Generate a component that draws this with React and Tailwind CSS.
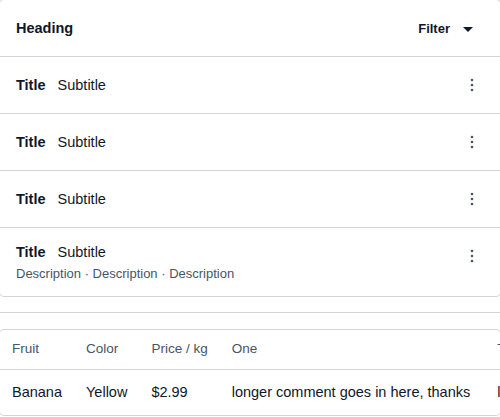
import React from "react";

function Kebab({ className = "" }) {
  return (
    <svg width="16" height="16" viewBox="0 0 16 16" className={className} aria-hidden="true">
      <circle cx="8" cy="3" r="1.3" fill="#4b5563" />
      <circle cx="8" cy="8" r="1.3" fill="#4b5563" />
      <circle cx="8" cy="13" r="1.3" fill="#4b5563" />
    </svg>
  );
}

function Row() {
  return (
    <div className="flex h-[57px] items-center justify-between border-b border-[#d4d4d8] pl-4 pr-5">
      <div className="flex items-baseline text-[14.5px] leading-[22px] text-[#0f172a]">
        <span className="font-bold">Title</span>
        <span className="ml-3">Subtitle</span>
      </div>
      <Kebab />
    </div>
  );
}

export default function App() {
  return (
    <div
      className="min-h-[417px] w-[500px] overflow-hidden bg-white"
      style={{ fontFamily: '"Liberation Sans", Arial, sans-serif' }}
    >
      <div className="rounded-[4px] bg-white ring-1 ring-[#d4d4d8]">
        <div className="flex h-[57px] items-center justify-between border-b border-[#d4d4d8] pl-4 pr-[27px] pt-[2px]">
          <span className="text-[14.5px] font-bold text-[#0f172a]">Heading</span>
          <button className="flex items-center gap-[13px] text-[13px] font-bold text-[#0f172a]">
            <span>Filter</span>
            <svg width="10" height="5" viewBox="0 0 10 5" className="mt-[1px]" aria-hidden="true">
              <path d="M0 0 L10 0 L5 5 Z" fill="#0f172a" />
            </svg>
          </button>
        </div>
        <Row />
        <Row />
        <Row />
        <div className="flex h-[68px] items-start justify-between pl-4 pr-5 pt-[13px]">
          <div>
            <div className="flex items-baseline text-[14.5px] leading-[22px] text-[#0f172a]">
              <span className="font-bold">Title</span>
              <span className="ml-3">Subtitle</span>
            </div>
            <div className="mt-[1px] text-[13px] leading-[20px] text-[#475569]">
              Description · Description · Description
            </div>
          </div>
          <Kebab className="mt-[7px]" />
        </div>
      </div>

      <div className="mt-4 h-px bg-[#d4d4d8]" />

      <div className="mt-[17px] overflow-hidden rounded-[4px] bg-white ring-1 ring-[#d4d4d8]">
        <table className="border-separate border-spacing-0 whitespace-nowrap text-left">
          <thead>
            <tr className="text-[13.5px] text-[#475569]">
              <th className="border-b border-[#d4d4d8] px-3 pb-[11px] pt-[9px] font-normal leading-[19px]">Fruit</th>
              <th className="border-b border-[#d4d4d8] px-3 pb-[11px] pt-[9px] font-normal leading-[19px]">Color</th>
              <th className="border-b border-[#d4d4d8] px-3 pb-[11px] pt-[9px] font-normal leading-[19px]">Price / kg</th>
              <th className="border-b border-[#d4d4d8] px-3 pb-[11px] pt-[9px] font-normal leading-[19px]">One</th>
              <th className="border-b border-[#d4d4d8] pl-[15px] pr-3 pb-[11px] pt-[9px] font-normal leading-[19px]">Two</th>
            </tr>
          </thead>
          <tbody>
            <tr className="text-[14.5px] text-[#0f172a]">
              <td className="px-3 pb-[13px] pt-3 leading-5">Banana</td>
              <td className="px-3 pb-[13px] pt-3 leading-5">Yellow</td>
              <td className="px-3 pb-[13px] pt-3 leading-5">$2.99</td>
              <td className="px-3 pb-[13px] pt-3 leading-5">longer comment goes in here, thanks</td>
              <td className="pl-[15px] pr-3 pb-[13px] pt-3 leading-5">lorem ipsum</td>
            </tr>
          </tbody>
        </table>
      </div>
    </div>
  );
}
